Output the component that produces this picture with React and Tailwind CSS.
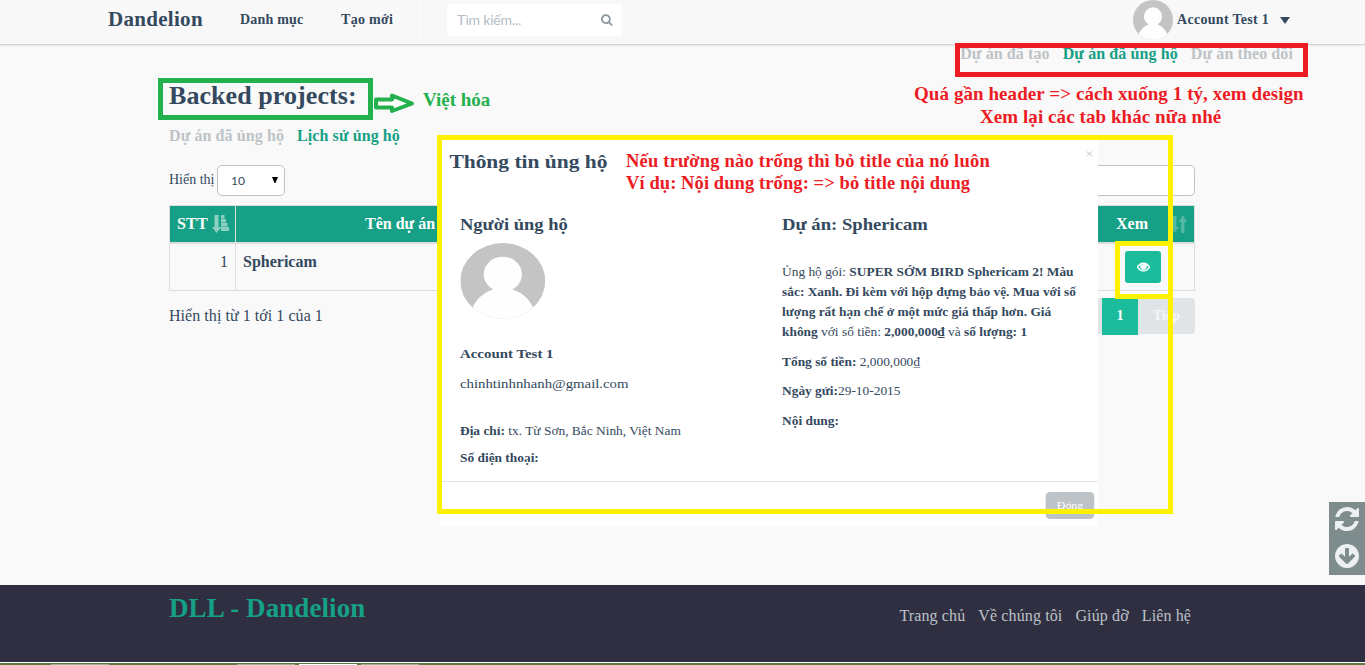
import React from "react";

const serif = "font-['Liberation_Serif',serif]";

function Glyph({ d, viewBox, className }) {
  return (
    <svg viewBox={viewBox} className={className} fill="currentColor" aria-hidden="true">
      <path d={d} />
    </svg>
  );
}

const SEARCH =
  "M1216 832q0-185-131.5-316.5t-316.5-131.5-316.5 131.5-131.5 316.5 131.5 316.5 316.5 131.5 316.5-131.5 131.5-316.5zm512 832q0 52-38 90t-90 38q-54 0-90-38l-343-342q-179 124-399 124-143 0-273.5-55.5t-225-150-150-225-55.5-273.5 55.5-273.5 150-225 225-150 273.5-55.5 273.5 55.5 225 150 150 225 55.5 273.5q0 220-124 399l343 343q37 37 37 90z";
const REFRESH =
  "M1511 928q0 5-1 7-64 268-268 434.5t-478 166.5q-146 0-282.5-55t-243.5-157l-129 129q-19 19-45 19t-45-19-19-45v-448q0-26 19-45t45-19h448q26 0 45 19t19 45-19 45l-137 137q71 66 161 102t187 36q134 0 250-65t186-179q11-17 53-117 8-23 30-23h192q13 0 22.5 9.5t9.5 22.5zm25-800v448q0 26-19 45t-45 19h-448q-26 0-45-19t-19-45 19-45l138-138q-148-137-349-137-134 0-250 65t-186 179q-11 17-53 117-8 23-30 23h-199q-13 0-22.5-9.5t-9.5-22.5v-7q65-268 270-434.5t480-166.5q146 0 284 55.5t245 156.5l130-129q19-19 45-19t45 19 19 45z";
const DOWN =
  "M1412 897q0-27-18-45l-91-91q-18-18-45-18t-45 18l-189 189v-502q0-26-19-45t-45-19h-128q-26 0-45 19t-19 45v502l-189-189q-19-19-45-19t-45 19l-91 91q-18 18-18 45t18 45l362 362 91 91q18 18 45 18t45-18l91-91 362-362q18-18 18-45zm252-1q0 209-103 385.5t-279.5 279.5-385.5 103-385.5-103-279.5-279.5-103-385.5 103-385.5 279.5-279.5 385.5-103 385.5 103 279.5 279.5 103 385.5z";
const EYE =
  "M1664 960q-152-236-381-353 61 104 61 225 0 185-131.5 316.5t-316.5 131.5-316.5-131.5-131.5-316.5q0-121 61-225-229 117-381 353 133 205 333.5 326.5t434.5 121.5 434.5-121.5 333.5-326.5zm-720-384q0-20-14-34t-34-14q-125 0-214.5 89.5t-89.5 214.5q0 20 14 34t34 14 34-14 14-34q0-86 61-147t147-61q20 0 34-14t14-34zm848 384q0 34-20 69-140 230-376.5 368.5t-499.5 138.5-499.5-139-376.5-368q-20-35-20-69t20-69q140-229 376.5-368t499.5-139 499.5 139 376.5 368q20 35 20 69z";

function Avatar({ className }) {
  return (
    <svg viewBox="0 0 80 80" preserveAspectRatio="none" className={className} aria-hidden="true">
      <clipPath id="round"><circle cx="40" cy="40" r="40" /></clipPath>
      <g clipPath="url(#round)">
        <rect width="80" height="80" fill="#c4c4c4" />
        <ellipse cx="40" cy="33" rx="18" ry="18.500" fill="#fefefe" />
        <path d="M31 46h18v3c9 3 16 10 20 20v11H11V69c4-10 11-17 20-20z" fill="#fefefe" />
      </g>
    </svg>
  );
}

function Header() {
  return (
    <header className="flex h-[45px] shrink-0 items-start border-b border-[#d3d3d3] bg-[#f8f8f8] pl-[108px] font-bold shadow-[0_1px_2px_rgba(0,0,0,0.08)]">
      <span className="w-[132px] text-[21px] leading-[39px] tracking-[0.3px]">Dandelion</span>
      <span className="w-[101px] text-[14px] leading-[40px] tracking-[0.2px]">Danh mục</span>
      <span className="h-[41px] w-[79px] border-r border-white text-[14px] leading-[40px] tracking-[0.3px]">Tạo mới</span>
      <div className="ml-[27px] mt-1 flex h-8 w-[175px] items-center justify-between rounded bg-white pl-[10px] pr-[9px] font-['Lato',sans-serif] text-[14px] font-normal tracking-[-0.2px] text-[#b2bcc5]">
        <span className="-mt-0.5">Tìm kiếm...</span>
        <Glyph d={SEARCH} viewBox="64 128 1728 1664" className="h-3 w-3 text-[#8c9aa0]" />
      </div>
      <div className="ml-auto mr-[75px] flex h-10 items-center">
        <Avatar className="h-10 w-10" />
        <span className="ml-1 w-[103px] text-[14px] leading-[40px] tracking-[0.3px]">Account Test 1</span>
        <svg viewBox="0 0 10 7" className="h-[7px] w-[10px]" fill="#34495e"><path d="M0 0h10L5 7z" /></svg>
      </div>
    </header>
  );
}

function SortBoth() {
  return (
    <svg viewBox="0 0 16 18" className="h-[18px] w-4" fill="#fff" fillOpacity="0.25">
      <path d="M2 1h3.500v11H8L3.500 18 0 12h2zM10 18h3.500V7H16L11.800 0 7.500 7H10z" />
    </svg>
  );
}

function SortAsc() {
  return (
    <svg viewBox="0 0 17 18" className="h-[18px] w-[17px]" fill="#fff" fillOpacity="0.5">
      <path d="M2.500 0h4v12h3L4.500 18 0 12h2.500zM9 0h3.500v3.500H9zM9 4h5v3.500H9zM9 8h6.500v3.500H9zM9 12h8v4H9z" />
    </svg>
  );
}

function ProjectTable() {
  return (
    <div className="mt-[9px] grid h-[86px] grid-cols-[66px_1fr_125px] grid-rows-[38px_46px] border border-[#dddddd]">
      <div className="flex items-center justify-between border-r border-b-2 border-[#dddddd] bg-[#16a085] pl-[7px] pr-1.5 font-bold tracking-[0.2px] text-white">
        STT <SortAsc />
      </div>
      <div className="border-b-2 border-[#dddddd] bg-[#16a085] pl-[129px] font-bold leading-9 text-white">Tên dự án</div>
      <div className="flex items-center justify-between border-b-2 border-l border-[#dddddd] bg-[#16a085] pl-[46px] pr-[7px] font-bold text-white">
        Xem <SortBoth />
      </div>
      <div className="border-r border-[#dddddd] pr-[7px] text-right leading-[36px]">1</div>
      <div className="pl-[7px] font-bold leading-[36px]">Sphericam</div>
      <div className="border-l border-[#dddddd] pl-[55px] pt-[7px]">
        <button className="flex h-8 w-9 items-center justify-center rounded-[3px] bg-[#1abc9c] text-white">
          <svg viewBox="0 128 1792 1792" className="h-[13px] w-[13px]" fill="currentColor" stroke="currentColor" strokeWidth="90" aria-hidden="true">
            <path d={EYE} />
          </svg>
        </button>
      </div>
    </div>
  );
}

function SupportDialog() {
  return (
    <div className="absolute left-[440px] top-[138px] h-[388px] w-[658px] overflow-hidden bg-white">
      <div className="flex h-full w-[582.3px] origin-left scale-x-[1.13] flex-col whitespace-nowrap">
        <div className="flex h-[77px] justify-between pl-[8.300px] pr-[4px] pt-[14px]">
          <h3 className="text-[19px] font-bold leading-[20px]">Thông tin ủng hộ</h3>
          <span className="-mt-2 text-[13px] leading-[20px] text-[#c4c8cb]">×</span>
        </div>
        <div className="grid h-[267px] grid-cols-[285px_1fr] border-b border-[#e2e4e5] pl-[17.700px] text-[11.850px] leading-[20px]">
          <div>
            <h4 className="text-[16.400px] font-bold">Người ủng hộ</h4>
            <Avatar className="mt-2 h-[76px] w-[75.200px]" />
            <p className="mt-[25px] text-[13.200px] font-bold">Account Test 1</p>
            <p className="mt-[10px] text-[13.100px]">chinhtinhnhanh@gmail.com</p>
            <p className="mt-[27px]"><b>Địa chỉ:</b> tx. Từ Sơn, Bắc Ninh, Việt Nam</p>
            <p className="mt-[7px] font-bold">Số điện thoại:</p>
          </div>
          <div>
            <h4 className="text-[16.500px] font-bold">Dự án: Sphericam</h4>
            <p className="mt-[27px]">
              Ủng hộ gói: <b>SUPER SỚM BIRD Sphericam 2! Màu<br />
              sắc: Xanh. Đi kèm với hộp đựng bảo vệ. Mua với số<br />
              lượng rất hạn chế ở một mức giá thấp hơn. Giá<br />
              không</b> với số tiền: <b>2,000,000₫</b> và <b>số lượng: 1</b>
            </p>
            <p className="mt-[10px]"><b>Tổng số tiền:</b> 2,000,000₫</p>
            <p className="mt-[9px]"><b>Ngày gửi:</b>29-10-2015</p>
            <p className="mt-[10px] font-bold">Nội dung:</p>
          </div>
        </div>
        <div className="flex justify-end pr-[3.500px] pt-[10px]">
          <button className="h-[27px] w-[42.500px] rounded-sm bg-[#bdc3c7] text-[10.500px] leading-[25px] text-white">Đóng</button>
        </div>
      </div>
    </div>
  );
}

function Annotations() {
  return (
    <>
      <div className="absolute left-[158px] top-[78px] h-[42px] w-[215px] border-[5px] border-[#22b14c]" />
      <svg viewBox="0 0 42 22" className="absolute left-[373px] top-[92px] h-[22px] w-[42px]" fill="#fff" stroke="#22b14c" strokeWidth="4" strokeLinejoin="round">
        <path d="M3 7.500h16V3.500L39 11.500 19 19v-3.500H3z" />
      </svg>
      <span className="absolute left-[423px] top-[90px] text-[19px] font-bold leading-5 text-[#22b14c]">Việt hóa</span>
      <div className="absolute left-[955px] top-[43px] h-[34px] w-[353px] border-[5px] border-[#ed1c24]" />
      <p className="absolute left-[914px] top-[82px] whitespace-nowrap text-[19px] font-bold leading-[23px] tracking-[0.070px] text-[#ed1c24]">
        Quá gần header =&gt; cách xuống 1 tý, xem design<br />
        <span className="pl-[66px]">Xem lại các tab khác nữa nhé</span>
      </p>
      <p className="absolute left-[626px] top-[150px] whitespace-nowrap text-[18.500px] font-bold leading-[22px] text-[#ed1c24]">
        <span className="tracking-[0.200px]">Nếu trường nào trống thì bỏ title của nó luôn</span><br />
        <span className="tracking-[0.090px]">Ví dụ: Nội dung trống: =&gt; bỏ title nội dung</span>
      </p>
      <div className="absolute left-[1115px] top-[241px] h-[58px] w-[58px] border-[5px] border-[#fff200]" />
      <div className="absolute left-[437px] top-[135px] h-[379px] w-[736px] border-[5px] border-[#fff200]" />
    </>
  );
}

export default function App() {
  return (
    <div className={`relative flex h-[665px] w-[1365px] flex-col overflow-hidden bg-[#f9f9f9] text-[16px] text-[#34495e] ${serif}`}>
      <Header />
      <nav className="-mt-px flex h-9 justify-end gap-[13px] pr-[72px] font-bold leading-[20px] tracking-[0.100px] text-[#bdc3c7]">
        <span>Dự án đã tạo</span>
        <span className="text-[#16a085]">Dự án đã ủng hộ</span>
        <span>Dự án theo dõi</span>
      </nav>
      <main className="ml-[169px] flex h-[505px] w-[1026px] shrink-0 flex-col">
        <h1 className="pt-px text-[26px] font-bold leading-[30px] tracking-[0.070px]">Backed projects:</h1>
        <div className="mt-[15px] flex gap-[13px] font-bold leading-[20px] tracking-[0.090px] text-[#bdc3c7]">
          <span>Dự án đã ủng hộ</span>
          <span className="text-[#16a085]">Lịch sử ủng hộ</span>
        </div>
        <div className="mt-[19px] flex h-[31px] text-[14px]">
          <span className="w-12 leading-[29px]">Hiển thị</span>
          <div className="flex w-[68px] items-center justify-between rounded-[5px] border border-[#bdc3c7] bg-white pl-[13px] pr-[6px] font-['Lato',sans-serif] text-[12px]">
            <span>10</span>
            <svg viewBox="0 0 6 6" className="mb-0.5 h-1.5 w-1.5" fill="#000"><path d="M0 0h6L3.500 6h-1z" /></svg>
          </div>
          <div className="ml-auto w-[200px] rounded-[5px] border border-[#bdc3c7] bg-white" />
        </div>
        <ProjectTable />
        <div className="mt-[7px] flex h-[37px] justify-between">
          <span className="leading-[36px] tracking-[0.050px]">Hiển thị từ 1 tới 1 của 1</span>
          <div className="flex text-[14px] font-bold leading-9 text-white">
            <span className="h-9 w-[70px] rounded-l bg-[#e1e4e7]" />
            <span className="h-[37px] w-9 bg-[#1abc9c] text-center">1</span>
            <span className="h-9 w-[57px] rounded-r bg-[#e1e4e7] text-center text-[#f6f7f8]">Tiếp</span>
          </div>
        </div>
      </main>
      <footer className="flex h-[77px] shrink-0 justify-between bg-[#2f2f41] pl-[169px] pr-[174px]">
        <span className="text-[27px] font-bold leading-[47px] tracking-[0.090px] text-[#16a085]">DLL - Dandelion</span>
        <div className="flex gap-[13px] pt-[20px] leading-[22px] tracking-[0.120px] text-[#bdc3c7]">
          <span>Trang chủ</span>
          <span>Về chúng tôi</span>
          <span>Giúp đỡ</span>
          <span>Liên hệ</span>
        </div>
      </footer>
      <div className="flex h-[3px] shrink-0 items-end border-t border-white bg-[#5c7b40] pl-[51px]">
        <span className="h-px w-[58px] bg-[#a3b094]" />
        <span className="ml-32 h-px w-[58px] bg-[#a3b094]" />
        <span className="ml-1 h-px w-[58px] bg-white" />
        <span className="ml-1 h-px w-[58px] bg-[#a3b094]" />
      </div>
      <div className="absolute left-[1329px] top-[502px] flex h-[73px] w-9 flex-col items-center gap-[13px] bg-[#7f8c8d] pt-[5px] text-[#ecf0f1]">
        <Glyph d={REFRESH} viewBox="0 0 1536 1536" className="h-6 w-6" />
        <Glyph d={DOWN} viewBox="128 128 1536 1536" className="h-6 w-6" />
      </div>
      <SupportDialog />
      <Annotations />
    </div>
  );
}
